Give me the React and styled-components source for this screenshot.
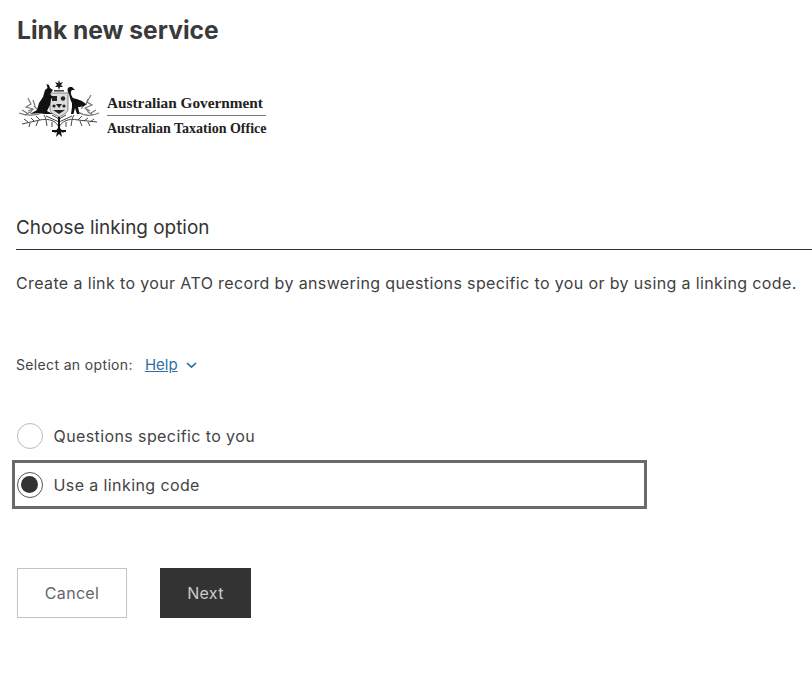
import styled, { createGlobalStyle } from 'styled-components'

const GlobalStyle = createGlobalStyle`
  html, body {
    margin: 0;
    padding: 0;
    background: #fff;
  }

  body {
    font-family: Inter, "Liberation Sans", sans-serif;
    color: #333;
  }
`

const Crest = () => (
  <svg width="84" height="62" viewBox="18 78 84 62" aria-hidden="true">
    {/* upper wattle, behind the supporters */}
    <g fill="none" stroke="#777" strokeWidth="1.2">
      <path d="M19 113 C26 116 36 116 44 112 M99 113 C92 116 84 116 78 112" />
      <path d="M28 98 L31 104 L26 107 L33 109 L28 111 M91 95 L87 102 L92 105 L85 108 L90 111" />
      <path d="M22 110 L27 113 M25 115 L30 112 M34 106 L38 110 M96 110 L91 113 M93 115 L88 112 M85 104 L81 109" />
      <path d="M33 100 L35 106 M30 113 L33 109 M88 99 L86 105 M89 113 L86 109" />
    </g>
    {/* lower branches */}
    <g fill="none" stroke="#444" strokeWidth="1">
      <path d="M59 128 C57 121 49 118 40 120 L22 124" />
      <path d="M59 128 C61 121 69 118 78 120 L97 122" />
      <path d="M59 122 L46 116 M59 122 L72 116 M59 119 L52 115 M59 119 L66 115" />
      <path d="M40 120 L36 116 M46 119 L44 115 M34 121 L31 118 M28 122 L24 119" />
      <path d="M78 120 L82 116 M72 119 L74 115 M84 121 L88 118 M90 122 L94 119" />
      <path d="M38 121 L36 126 M46 120 L47 126 M30 123 L29 127 M52 122 L52 127" />
      <path d="M80 121 L82 126 M72 120 L71 126 M88 122 L90 126 M66 122 L66 127" />
    </g>
    {/* star and crown */}
    <path d="M59 80 L60 83 L63 82 L61 85 L63 87 L60 87 L59 90 L58 87 L55 87 L57 85 L55 82 L58 83 Z" fill="#222" />
    <rect x="54" y="90" width="10" height="1.6" fill="#444" />
    {/* shield */}
    <path d="M50 93 L68 93 L68 109 C68 113 63 115 59 117 C55 115 50 113 50 109 Z" fill="#ddd" stroke="#555" strokeWidth="0.7" />
    <g fill="#222">
      <path d="M52 96 L57 96 L57 101 L52 101 Z" />
      <circle cx="63" cy="98.5" r="2.2" />
      <path d="M56 104 L62 104 L59 108 Z" />
      <circle cx="54" cy="106" r="1.6" />
      <circle cx="64" cy="106" r="1.6" />
      <path d="M53 110 L65 110 L59 114 Z" />
    </g>
    <g fill="#111">
      {/* kangaroo */}
      <path d="M49 85 L46.5 84 L47.5 88 L45 90 L43 97 L39 103 L37 110 L30 114 L40 113 L44 114 L53 114 L47 111 L50 105 L51 99 L53 97 L50 94 L53 90 L50 88 Z" />
      {/* emu */}
      <path d="M70 87 C67 87 67 91 69 94 C70 97 70 100 72 103 L72 107 L71 114 L73.5 114 L75 108 L77 114 L79.5 114 L78 107 C82 107 86 106 86 104 C82 100 76 99 73 98 C71 95 70 92 72 90 L75 90 L72 87 Z" />
      {/* trunk and roots */}
      <path d="M58 117 L60 117 L60 128 L64 133 L61 132 L62 137 L59 134 L56 137 L57 132 L54 133 L58 128 Z" />
      <path d="M52 130 L66 130 L66 132 L52 132 Z" />
    </g>
  </svg>
)

const Chevron = () => (
  <svg width="11" height="7" viewBox="0 0 11 7" aria-hidden="true">
    <path d="M1 1 L5.5 5.2 L10 1" fill="none" stroke="#2a6d9e" strokeWidth="1.7" />
  </svg>
)

const App = () => {
  return (
    <Page>
      <GlobalStyle />
      <Title>Link new service</Title>
      <Logo>
        <Crest />
        <LogoText>
          <LogoLine>Australian Government</LogoLine>
          <LogoLine ruled>Australian Taxation Office</LogoLine>
        </LogoText>
      </Logo>
      <Section>Choose linking option</Section>
      <Intro>
        Create a link to your ATO record by answering questions specific to you or by using a linking code.
      </Intro>
      <Prompt>
        Select an option:
        <HelpLink href="#">Help</HelpLink>
        <Chevron />
      </Prompt>
      <Options>
        <Option>
          <Radio />
          Questions specific to you
        </Option>
        <Option selected>
          <Radio selected />
          Use a linking code
        </Option>
      </Options>
      <Actions>
        <CancelButton>Cancel</CancelButton>
        <NextButton>Next</NextButton>
      </Actions>
    </Page>
  )
}

export default App

const Page = styled.main`
  width: 812px;
  height: 684px;
  box-sizing: border-box;
  padding-top: 14px;
  overflow: hidden;
`

const Title = styled.h1`
  margin: 0 0 0 17px;

  font-size: 24.6px;
  line-height: 32px;
  font-weight: 700;
  color: #3a3a3a;
`

const Logo = styled.div`
  display: flex;
  align-items: flex-start;

  margin: 32px 0 0 18px;
`

const LogoText = styled.div`
  margin: 17px 0 0 5px;
  width: 159px;

  font-family: "Liberation Serif", serif;
  font-weight: 700;
  color: #222;
`

const LogoLine = styled.div`
  font-size: ${p => (p.ruled ? '14px' : '15.3px')};
  line-height: 16px;
  white-space: nowrap;
  padding-top: ${p => (p.ruled ? '5px' : '0')};
  padding-bottom: ${p => (p.ruled ? '0' : '4px')};
  border-top: ${p => (p.ruled ? '1.5px solid #777' : 'none')};
`

const Section = styled.h2`
  margin: 76px 0 0 16px;
  padding-bottom: 9px;

  font-size: 18.9px;
  line-height: 24px;
  font-weight: 400;
  color: #333;
  border-bottom: 1.5px solid #333;
`

const Intro = styled.p`
  margin: 22px 0 0 16px;

  font-size: 16px;
  line-height: 22px;
  letter-spacing: 0.37px;
  white-space: nowrap;
  color: #3f3f3f;
`

const Prompt = styled.div`
  display: flex;
  align-items: center;

  margin: 61px 0 0 16px;

  font-size: 14px;
  line-height: 20px;
  letter-spacing: 0.35px;
  color: #444;
`

const HelpLink = styled.a`
  margin: 0 8px 0 12px;

  font-size: 15px;
  letter-spacing: 0;
  color: #2f6da3;
  text-decoration: underline;
`

const Options = styled.div`
  display: flex;
  flex-direction: column;

  margin: 37px 0 0 12px;
  width: 635px;
`

const Option = styled.label`
  display: flex;
  align-items: center;
  gap: 11px;

  box-sizing: border-box;
  height: ${p => (p.selected ? '49px' : '48px')};
  padding-left: 1.5px;

  font-size: 16px;
  letter-spacing: 0.4px;
  color: #444;
  border: 3px solid ${p => (p.selected ? '#6a6a6a' : 'transparent')};
`

const Radio = styled.span`
  position: relative;
  flex: none;

  box-sizing: border-box;
  width: 26px;
  height: 26px;

  background: #fff;
  border: 1.5px solid ${p => (p.selected ? '#555' : '#bbb')};
  border-radius: 50%;

  &::after {
    content: '';
    display: ${p => (p.selected ? 'block' : 'none')};
    position: absolute;
    inset: 3.5px;
    background: #333;
    border-radius: 50%;
  }
`

const Actions = styled.div`
  display: flex;
  gap: 33px;

  margin: 59px 0 0 17px;
`

const CancelButton = styled.button`
  width: 110px;
  height: 50px;
  padding: 0;

  font-family: inherit;
  font-size: 16px;
  letter-spacing: 0.3px;
  color: #666;
  background: #fff;
  border: 1px solid #c4c4c4;
`

const NextButton = styled(CancelButton)`
  width: 91px;

  color: #ccc;
  background: #333;
  border-color: #333;
`
